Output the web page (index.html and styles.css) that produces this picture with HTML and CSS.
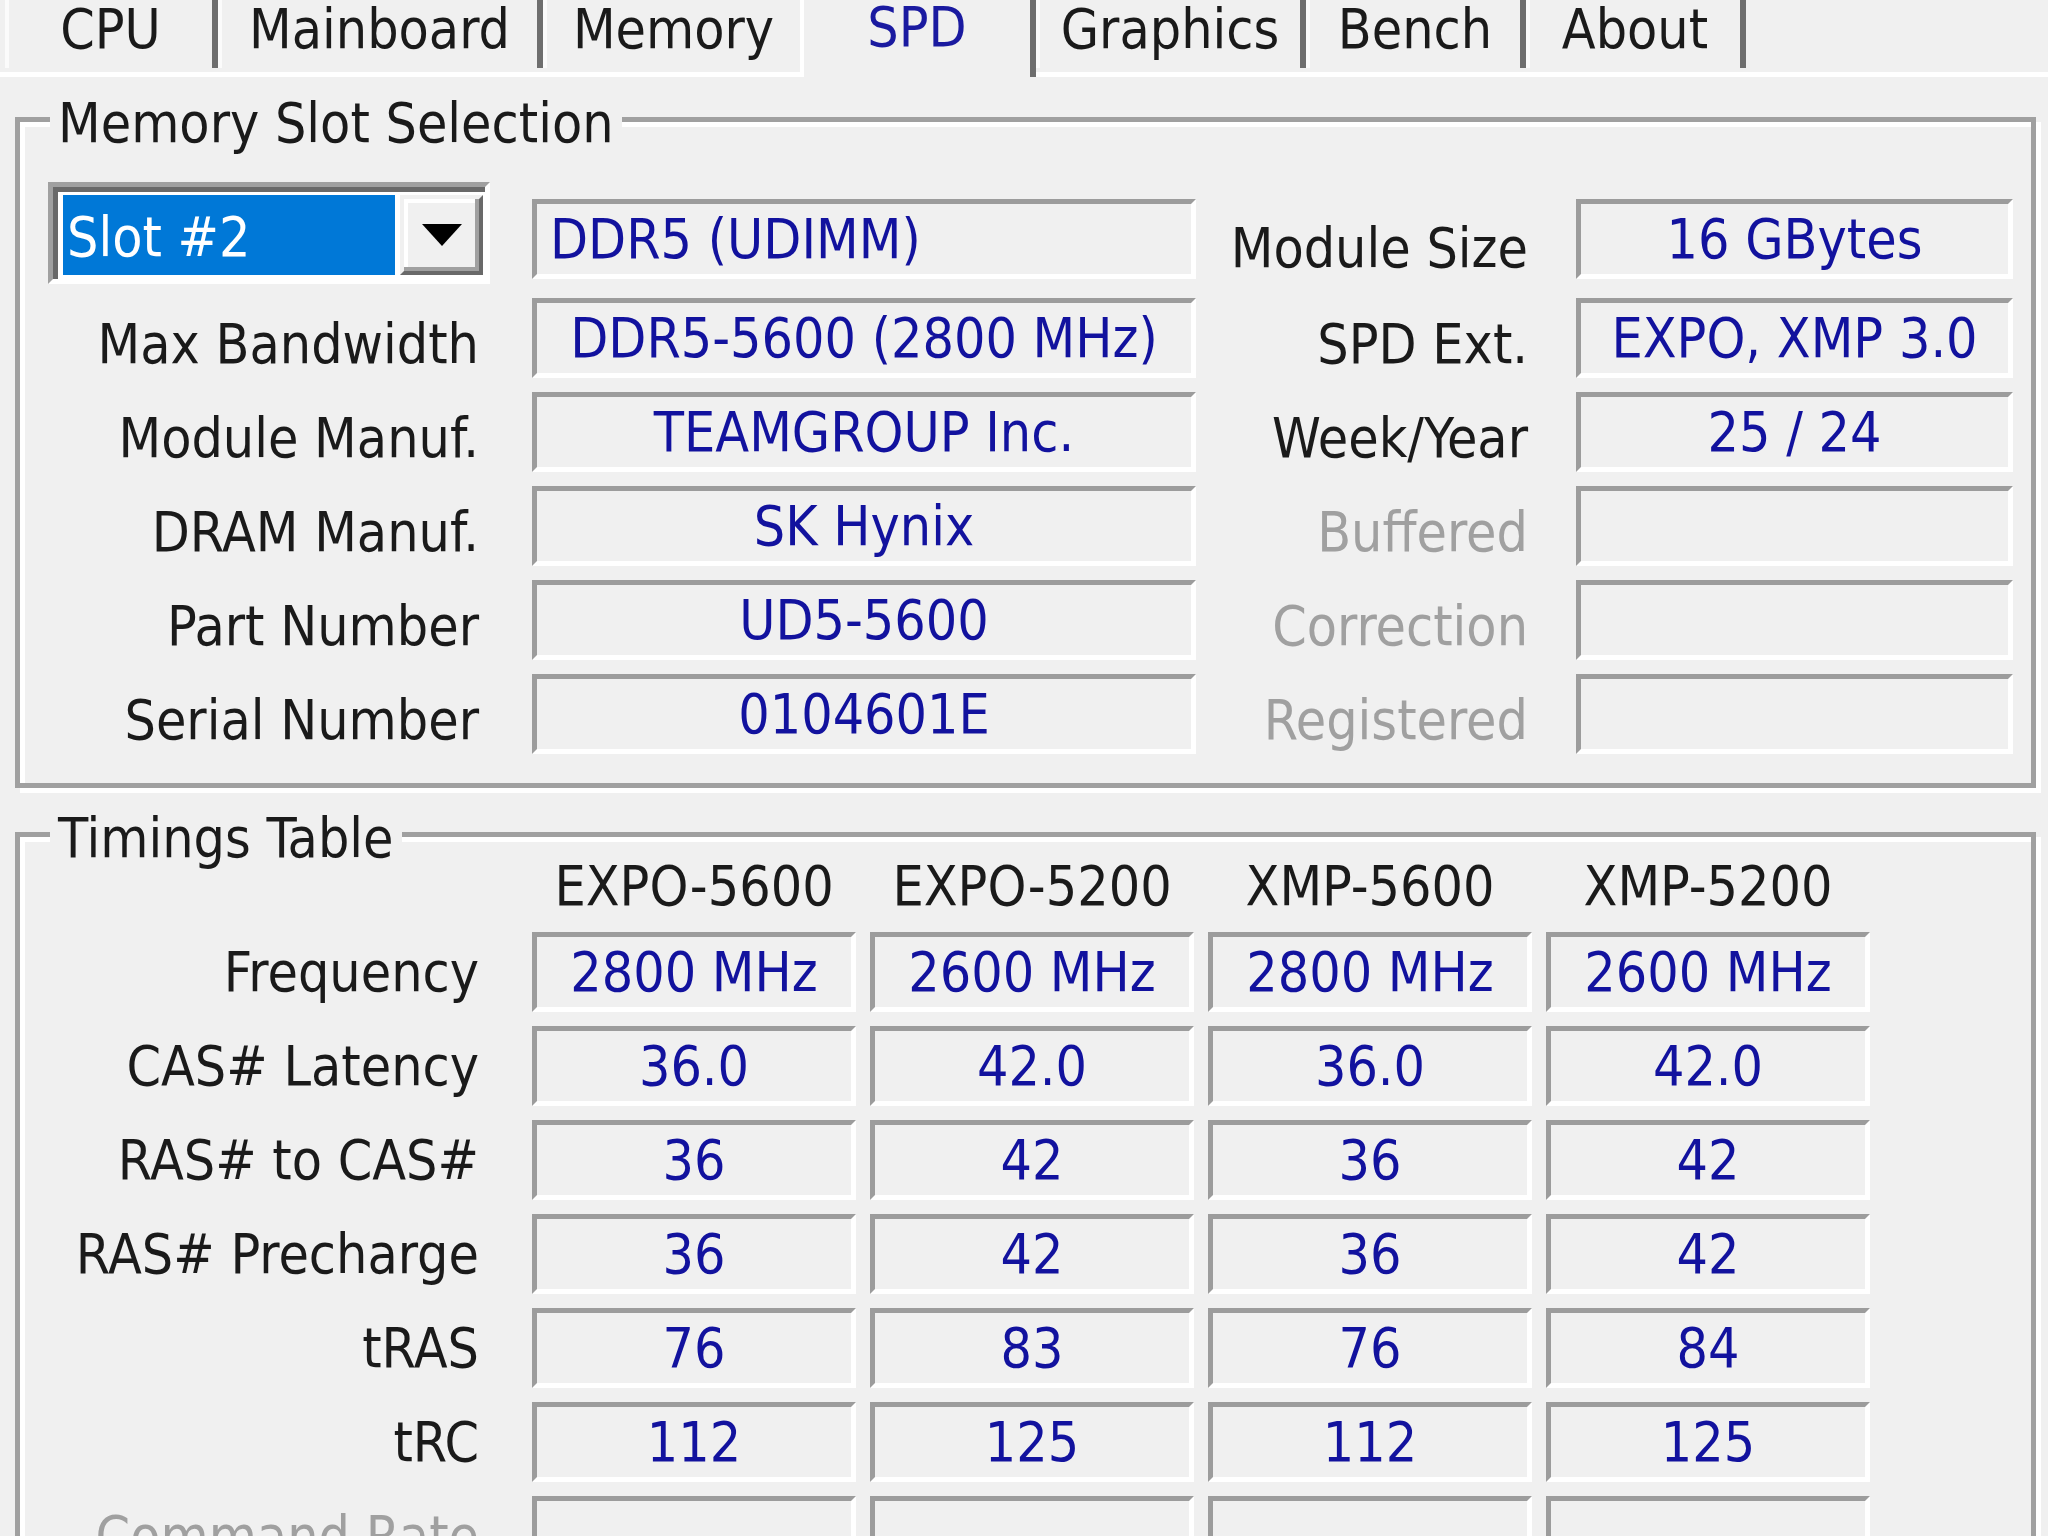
FILE: index.html
```html
<!DOCTYPE html>
<html lang="en">
<head>
<meta charset="utf-8">
<title>CPU-Z SPD</title>
<link rel="stylesheet" href="styles.css">
</head>
<body>
<div class="tabs">
  <div class="tab t-cpu">CPU</div>
  <div class="tab t-main">Mainboard</div>
  <div class="tab t-mem">Memory</div>
  <div class="tab t-spd active">SPD</div>
  <div class="tab t-gfx">Graphics</div>
  <div class="tab t-bench">Bench</div>
  <div class="tab t-about">About</div>
</div>
<div class="panel">
  <div class="group slot-group">
    <span class="legend">Memory Slot Selection</span>
    <div class="slot-grid">
      <div class="combo">
        <div class="combo-sel">Slot #2</div>
        <div class="combo-btn"><svg width="40" height="22" viewBox="0 0 40 22"><polygon points="0,0 40,0 20,22" fill="#000"/></svg></div>
      </div>
      <div class="field r1 left">DDR5 (UDIMM)</div>
      <div class="lbl lbl-r r1">Module Size</div>
      <div class="field r1">16 GBytes</div>

      <div class="lbl">Max Bandwidth</div>
      <div class="field">DDR5-5600 (2800 MHz)</div>
      <div class="lbl lbl-r">SPD Ext.</div>
      <div class="field">EXPO, XMP 3.0</div>

      <div class="lbl">Module Manuf.</div>
      <div class="field">TEAMGROUP Inc.</div>
      <div class="lbl lbl-r">Week/Year</div>
      <div class="field">25 / 24</div>

      <div class="lbl">DRAM Manuf.</div>
      <div class="field">SK Hynix</div>
      <div class="lbl lbl-r muted">Buffered</div>
      <div class="field"></div>

      <div class="lbl">Part Number</div>
      <div class="field">UD5-5600</div>
      <div class="lbl lbl-r muted">Correction</div>
      <div class="field"></div>

      <div class="lbl">Serial Number</div>
      <div class="field">0104601E</div>
      <div class="lbl lbl-r muted">Registered</div>
      <div class="field"></div>
    </div>
  </div>

  <div class="group timings">
    <span class="legend">Timings Table</span>
    <div class="tgrid">
      <div></div>
      <div class="th">EXPO-5600</div>
      <div class="th">EXPO-5200</div>
      <div class="th">XMP-5600</div>
      <div class="th">XMP-5200</div>

      <div class="tl">Frequency</div>
      <div class="field">2800 MHz</div>
      <div class="field">2600 MHz</div>
      <div class="field">2800 MHz</div>
      <div class="field">2600 MHz</div>

      <div class="tl">CAS# Latency</div>
      <div class="field">36.0</div>
      <div class="field">42.0</div>
      <div class="field">36.0</div>
      <div class="field">42.0</div>

      <div class="tl">RAS# to CAS#</div>
      <div class="field">36</div>
      <div class="field">42</div>
      <div class="field">36</div>
      <div class="field">42</div>

      <div class="tl">RAS# Precharge</div>
      <div class="field">36</div>
      <div class="field">42</div>
      <div class="field">36</div>
      <div class="field">42</div>

      <div class="tl">tRAS</div>
      <div class="field">76</div>
      <div class="field">83</div>
      <div class="field">76</div>
      <div class="field">84</div>

      <div class="tl">tRC</div>
      <div class="field">112</div>
      <div class="field">125</div>
      <div class="field">112</div>
      <div class="field">125</div>

      <div class="tl muted">Command Rate</div>
      <div class="field"></div>
      <div class="field"></div>
      <div class="field"></div>
      <div class="field"></div>
    </div>
  </div>
</div>
</body>
</html>
```
FILE: styles.css
```css
* { box-sizing: border-box; margin: 0; padding: 0; }
html, body { width: 2048px; height: 1536px; overflow: hidden; }
body {
  background: #f0f0f0;
  font-family: "DejaVu Sans Condensed", "Liberation Sans", Arial, sans-serif;
  font-size: 55px;
  color: #1a1a1a;
}

/* tab strip */
.tabs {
  display: flex;
  align-items: flex-start;
  height: 77px;
  padding-left: 5px;
  border-bottom: 5px solid #fff;
}
.tab {
  height: 68px;
  line-height: 58px;
  text-align: center;
  white-space: nowrap;
  background: #f0f0f0;
  border-left: 4px solid #fbfbfb;
  border-right: 6px solid #6e6e6e;
}
.tab.active {
  height: 77px;
  line-height: 54px;
  color: #1a1aa0;
  border-left-color: #fff;
}
.t-cpu { width: 213px; }
.t-main { width: 325px; }
.t-mem { width: 257px; border-right: none; }
.t-spd { width: 236px; }
.t-gfx { width: 270px; }
.t-bench { width: 220px; }
.t-about { width: 220px; }

/* panel + groups */
.panel { padding: 40px 12px 0 15px; }
.group {
  position: relative;
  border: 5px solid #a0a0a0;
  box-shadow: inset 5px 5px 0 #fff, 5px 5px 0 #fff;
}
.legend {
  position: absolute;
  top: -29px;
  left: 30px;
  padding: 0 8px;
  line-height: 60px;
  background: #f0f0f0;
  white-space: nowrap;
}
.slot-group { padding: 60px 18px 29px 28px; }
.slot-grid {
  display: grid;
  grid-template-columns: 484px 664px 380px 437px;
  grid-template-rows: 102px repeat(5, 80px);
  row-gap: 14px;
}

/* combo box */
.combo {
  width: 442px;
  height: 102px;
  display: flex;
  gap: 5px;
  padding: 8px 2px 4px 10px;
  background: #fff;
  border: 5px solid;
  border-color: #a0a0a0 #fff #fff #a0a0a0;
  box-shadow: inset 5px 5px 0 #696969;
}
.combo-sel {
  flex: 1;
  background: #0078d7;
  color: #fff;
  line-height: 84px;
  padding-left: 4px;
  white-space: nowrap;
}
.combo-btn {
  width: 83px;
  display: flex;
  align-items: center;
  justify-content: center;
  background: #f0f0f0;
  border: 4px solid;
  border-color: #f0f0f0 #696969 #696969 #f0f0f0;
  box-shadow: inset -4px -4px 0 #a0a0a0, inset 4px 4px 0 #fff;
}

/* value fields */
.field {
  height: 80px;
  display: flex;
  align-items: center;
  justify-content: center;
  white-space: nowrap;
  overflow: hidden;
  color: #12129e;
  border: 5px solid;
  border-color: #9c9c9c #fff #fff #9c9c9c;
}
.field.left { justify-content: flex-start; padding-left: 13px; }
.field.r1 { align-self: end; margin-bottom: 5px; }

/* labels */
.lbl {
  height: 80px;
  display: flex;
  align-items: center;
  justify-content: flex-end;
  padding: 12px 53px 0 0;
  white-space: nowrap;
}
.lbl-r { padding-right: 48px; }
.lbl.r1 { align-self: end; margin-bottom: 5px; padding-top: 18px; }
.muted { color: #a0a0a0; }

/* timings table */
.timings { margin-top: 44px; padding: 17px 18px 40px 28px; }
.tgrid {
  display: grid;
  grid-template-columns: 470px repeat(4, 324px);
  grid-template-rows: 64px;
  grid-auto-rows: 80px;
  column-gap: 14px;
  row-gap: 14px;
}
.th { text-align: center; line-height: 64px; white-space: nowrap; }
.tl {
  display: flex;
  align-items: center;
  justify-content: flex-end;
  padding-right: 39px;
  white-space: nowrap;
}
```
